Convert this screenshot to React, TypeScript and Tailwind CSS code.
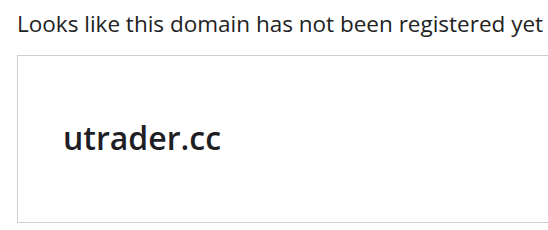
export default function App() {
  return (
    <div className="h-[230px] w-[548px] overflow-hidden bg-white pl-[17px] pt-[8px] font-['Open_Sans',sans-serif] text-[#222]">
      <h1 className="whitespace-nowrap text-[22.5px] leading-[32px] font-normal">
        Looks like this domain has not been registered yet
      </h1>
      <div className="mt-[15px] h-[168px] w-[600px] border border-[#cfcfcf] pl-[45px] pt-[60px]">
        <p className="text-[32px] leading-[44px] font-semibold text-[#1e1e24]">utrader.cc</p>
      </div>
    </div>
  );
}
